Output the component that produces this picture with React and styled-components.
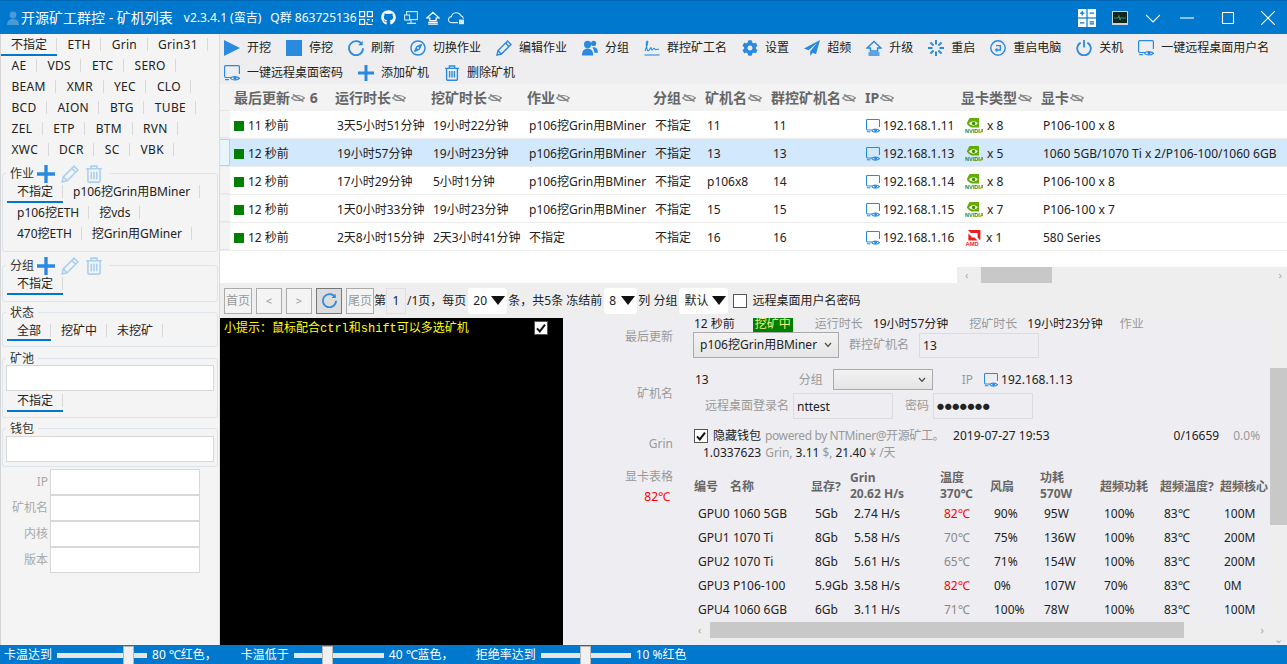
import React from 'react';
import styled, { createGlobalStyle } from 'styled-components';
import { FaGithub, FaCog, FaRegCompass } from 'react-icons/fa';

const BLUE = '#2a8ae0';
const FONT = '"Noto Sans", "Noto Sans CJK SC", sans-serif';

const Global = createGlobalStyle`
  html, body { margin: 0; height: 100%; overflow: hidden; }
  body { font: 12px/16px ${FONT}; color: #222; background: #eeeef2; }
  * { box-sizing: border-box; }
`;

const Page = styled.div`
  display: grid;
  grid-template-rows: 34px minmax(0, 1fr) 19px;
  grid-template-columns: 220px minmax(0, 1fr);
  height: 664px;
  overflow: hidden;
`;

/* ---------- title bar ---------- */
const TitleBar = styled.header`
  grid-column: 1 / 3;
  display: flex;
  align-items: center;
  background: #0078cd;
  border-top: 1px solid #0068b4;
  color: #fff;
  padding: 0 0 0 7px;
  white-space: nowrap;
`;
const Title = styled.span`
  font-size: 14px;
  margin: 0 11px 0 2px;
`;
const TitleInfo = styled.span`
  margin-right: ${p => p.$mr || 0}px;
`;
const TitleIcons = styled.div`
  display: flex;
  align-items: center;
  gap: 8px;
  margin-left: 2px;
  svg { display: block; }
`;
const WinButtons = styled.div`
  display: flex;
  align-items: center;
  margin-left: auto;
`;
const WinButton = styled.span`
  display: flex;
  justify-content: center;
  width: ${p => p.$w}px;
  svg { display: block; }
`;

/* ---------- side bar ---------- */
const Side = styled.aside`
  background: #f4f4f4;
  border-left: 1px solid #d4d4d4;
  border-right: 1px solid #dcdcdc;
  overflow: hidden;
  padding-top: 1px;
`;
const Tabs = styled.div`
  display: flex;
  flex-wrap: wrap;
  padding-left: ${p => p.$pl || 0}px;
  padding-right: ${p => p.$pr || 0}px;
`;
const Tab = styled.span`
  height: ${p => p.$h || 21}px;
  line-height: 19px;
  padding: 0 ${p => (p.$latin ? 10.5 : 10)}px;
  white-space: nowrap;
  letter-spacing: ${p => (p.$latin ? '.3px' : 0)};
  border-bottom: 2px solid ${p => (p.$on ? '#0078cd' : 'transparent')};
  background: linear-gradient(#d8d8d8, #d8d8d8) right 3px / 1px 13px no-repeat;
`;
const Group = styled.fieldset`
  margin: ${p => p.$mt || 0}px 1px 0;
  padding: 0 3px ${p => p.$pb || 6}px;
  border: 1px solid #dde4ec;
  border-radius: 3px;
  min-width: 0;
`;
const Legend = styled.legend`
  display: flex;
  align-items: center;
  height: 17px;
  padding: 0 4px;
  margin-left: 0;
  color: #333;
`;
const LegendIcons = styled.span`
  display: flex;
  align-items: center;
  gap: 6px;
  margin: 0 2px 0 3px;
`;
const WideInput = styled.div`
  height: 26px;
  background: #fff;
  border: 1px solid #d8d8d8;
  margin-top: ${p => p.$mt || 0}px;
`;
const FilterForm = styled.div`
  display: grid;
  grid-template-columns: 49px 150px;
  grid-auto-rows: 26px;
  margin-top: 2px;
`;
const FilterLabel = styled.label`
  color: #aaa;
  text-align: right;
  line-height: 26px;
  padding-right: 2px;
`;
const FilterInput = styled.div`
  background: #fff;
  border: 1px solid #d8d8d8;
`;

/* ---------- main area ---------- */
const Main = styled.main`
  display: flex;
  flex-direction: column;
  min-width: 0;
  min-height: 0;
`;
const Toolbar = styled.div`
  display: flex;
  flex-wrap: wrap;
  align-content: flex-start;
  gap: 0 15px;
  height: 50px;
  padding: 1px 0 0 4px;
  background: #eeeef0;
`;
const Tool = styled.span`
  display: flex;
  align-items: center;
  gap: 7px;
  height: 25px;
  white-space: nowrap;
  svg { display: block; flex: none; }
`;

const HEAD_COLS = '10px 101px 96px 96px 126px 52px 66px 94px 96px 80px 1fr';
const HeadRow = styled.div`
  display: grid;
  grid-template-columns: ${HEAD_COLS};
  height: 27px;
  align-items: center;
  background: #f3f3f3;
`;
const HeadCell = styled.span`
  display: flex;
  align-items: center;
  gap: 1px;
  padding-left: 4px;
  font-size: 14px;
  font-weight: 700;
  color: #666;
  white-space: nowrap;
`;
const Gutter = styled.span`
  align-self: stretch;
  background: ${p => (p.$on ? '#e9f5fd' : '#f3f3f3')};
  border: 1px solid ${p => (p.$on ? '#a0d8f4' : 'transparent')};
  border-left: 0;
  border-bottom-color: ${p => (p.$on ? '#a0d8f4' : '#e6e6e6')};
`;
const TableBody = styled.div`
  flex: 1;
  min-height: 0;
  background: #fff;
  display: flex;
  flex-direction: column;
`;
const MinerRow = styled.div`
  display: grid;
  grid-template-columns: ${HEAD_COLS};
  height: 28px;
  align-items: center;
  background: ${p => (p.$on ? '#d1e8fd' : '#fff')};
  border-bottom: 1px solid #ececec;
`;
const Cell = styled.span`
  display: flex;
  align-items: center;
  gap: ${p => p.$gap || 4}px;
  padding: 2px 0 0 ${p => p.$pl || 6}px;
  white-space: nowrap;
  overflow: hidden;
  color: #222;
  svg { flex: none; }
`;
const Dot = styled.i`
  width: 10px;
  height: 10px;
  background: #008000;
`;
const HScrollRow = styled.div`
  margin-top: auto;
  display: flex;
  justify-content: flex-end;
`;
const HScroll = styled.div`
  display: flex;
  align-items: center;
  justify-content: space-between;
  width: ${p => p.$w}px;
  height: 16px;
  background: #eeeeee;
  color: #aaa;
  font-size: 11px;
  padding: 0 ${p => p.$pr || 5}px 0 ${p => p.$pl || 5}px;
`;
const Thumb = styled.i`
  height: 100%;
  width: ${p => p.$w}px;
  margin: 0 ${p => p.$mr}px 0 ${p => p.$ml || 6}px;
  background: #c8c8c8;
`;

/* ---------- pager ---------- */
const Pager = styled.div`
  display: flex;
  align-items: center;
  height: 35px;
  padding-left: 4px;
  background: #eeeeee;
  white-space: nowrap;
`;
const PageButton = styled.span`
  display: flex;
  align-items: center;
  justify-content: center;
  height: 26px;
  width: ${p => p.$w || 26}px;
  margin-right: ${p => p.$mr ?? 4}px;
  border: 1px solid ${p => (p.$on ? '#777' : '#aaa')};
  background: ${p => (p.$on ? '#dcdcdc' : '#f4f4f4')};
  color: #999;
  font-size: ${p => (p.$w ? 12 : 11)}px;
`;
const PageNo = styled.span`
  width: 20px;
  height: 26px;
  line-height: 24px;
  text-align: center;
  border: 1px solid #e0e0e0;
  margin-right: 1px;
`;
const PageSelect = styled.span`
  display: flex;
  align-items: center;
  justify-content: space-between;
  width: ${p => p.$w}px;
  height: 26px;
  margin: 0 ${p => p.$mr ?? 1}px 0 ${p => p.$ml ?? 2}px;
  padding: 0 2px 0 5px;
  background: #fff;
  border-radius: 3px;
  font-size: 12px;
`;
const Tri = styled.i`
  width: 0;
  height: 0;
  border-left: 7px solid transparent;
  border-right: 7px solid transparent;
  border-top: 9px solid #111;
`;
const Check = styled.span`
  display: inline-flex;
  align-items: center;
  justify-content: center;
  flex: none;
  width: 14px;
  height: 14px;
  background: #fff;
  border: 1px solid #555;
`;

/* ---------- bottom split ---------- */
const Split = styled.div`
  display: flex;
  height: 327px;
`;
const Console = styled.div`
  width: 343px;
  background: #000;
  display: flex;
  justify-content: space-between;
  padding: 3px 15px 0 4px;
  color: #ffff00;
  font-family: "Liberation Mono", "Noto Sans CJK SC", monospace;
`;
const Detail = styled.div`
  flex: 1;
  min-width: 0;
  display: flex;
  overflow: hidden;
  background: #eeeef2;
`;
const DetailBody = styled.div`
  width: 707px;
  margin-top: -3px;
`;
const Section = styled.section`
  display: flex;
  gap: 20px;
  margin-top: ${p => p.$mt || 0}px;
`;
const SectionLabel = styled.div`
  flex: none;
  width: 110px;
  align-self: ${p => (p.$top ? 'flex-start' : 'center')};
  padding-top: ${p => (p.$top ? 2 : 0)}px;
  text-align: right;
  color: #999;
`;
const Temp = styled.div`
  color: #f00;
  margin: 4px 3px 0 0;
`;
const Lines = styled.div`
  flex: 1;
  min-width: 0;
`;
const Line = styled.div`
  display: flex;
  align-items: center;
  height: ${p => p.$h || 17}px;
  margin-top: ${p => p.$mt || 0}px;
  padding-left: ${p => p.$pl || 0}px;
  white-space: nowrap;
  svg { flex: none; display: block; }
`;
const Val = styled.span`
  margin-left: ${p => p.$ml || 0}px;
`;
const Dim = styled.span`
  color: #999;
  margin-left: ${p => p.$ml || 0}px;
  letter-spacing: ${p => p.$ls || 0};
`;
const Badge = styled.span`
  background: #008000;
  color: #f2f27a;
  width: 40px;
  text-align: center;
  margin-left: ${p => p.$ml}px;
`;
const Combo = styled.span`
  display: flex;
  align-items: center;
  justify-content: space-between;
  width: ${p => p.$w}px;
  height: ${p => p.$h}px;
  padding: 0 6px;
  margin-left: ${p => p.$ml || 0}px;
  border: 1px solid #aaa;
  background: linear-gradient(#f2f2f2, #e5e5e5);
`;
const TextBox = styled.span`
  display: block;
  width: ${p => p.$w}px;
  height: ${p => p.$h || 26}px;
  line-height: ${p => (p.$h || 26) - 1}px;
  margin-left: ${p => p.$ml || 0}px;
  padding-left: ${p => p.$pl || 3}px;
  border: 1px solid #dcdcdc;
`;
const Dots = styled(TextBox)`
  font-size: 7px;
  letter-spacing: .6px;
`;
const GpuWrap = styled.div`
  overflow: hidden;
  white-space: nowrap;
`;
const GPU_TAIL = '39px 90px 50px 50px 60px 60px 60px 60px';
const GpuHead = styled.div`
  display: grid;
  grid-template-columns: 36px 81px ${GPU_TAIL};
  height: 35px;
  align-items: end;
  padding-left: 1px;
  color: #666;
  font-weight: 700;
  line-height: 16px;
`;
const GpuHeadCell = styled.div`
  align-self: ${p => (p.$two ? 'end' : 'center')};
  margin-top: ${p => (p.$two ? 0 : 4)}px;
`;
const GpuRow = styled.div`
  display: grid;
  grid-template-columns: 35px 78px ${GPU_TAIL};
  height: 24px;
  align-items: center;
  padding-left: 5px;
`;
const GpuCell = styled.span`
  padding-left: ${p => p.$pl ?? 4}px;
  color: ${p => p.$color || '#222'};
`;
const VScroll = styled.div`
  flex: none;
  width: 17px;
  background: #eeeeee;
  display: flex;
  flex-direction: column;
  align-items: center;
  color: #aaa;
`;
const VThumb = styled.i`
  width: 100%;
  height: 157px;
  margin-top: 50px;
  background: #c8c8c8;
`;
const VArrow = styled.span`
  margin-top: auto;
  line-height: 12px;
  font-size: 11px;
`;

/* ---------- status bar ---------- */
const Status = styled.footer`
  grid-column: 1 / 3;
  display: flex;
  align-items: center;
  background: #0078cd;
  color: #fff;
  padding: 1px 0 0 4px;
  white-space: nowrap;
`;
const Track = styled.span`
  position: relative;
  width: 90px;
  height: 5px;
  margin: 0 5px;
  background: #e6e6e6;
`;
const Knob = styled.i`
  position: absolute;
  top: -7px;
  left: ${p => p.$at}px;
  width: 11px;
  height: 19px;
  background: #f0f0f0;
  border: 1px solid #b5b5b5;
`;
const StatusText = styled.span`
  margin-right: ${p => p.$mr || 0}px;
`;

/* ---------- drawings ---------- */
const Ico = ({ children, s = 16, vb = 16, ...r }) => (
  <svg width={s} height={s} viewBox={`0 0 ${vb} ${vb}`} fill="none" stroke={BLUE} strokeWidth="1.4" {...r}>{children}</svg>
);
const PlayIcon = () => <Ico stroke="none"><path d="M0 0L16 8L0 16Z" fill={BLUE} /></Ico>;
const StopIcon = () => <Ico stroke="none"><rect width="16" height="16" fill={BLUE} /></Ico>;
const RefreshIcon = ({ s = 16 }) => (
  <Ico s={s} strokeWidth="1.8"><path d="M14 4.6A7 7 0 1 0 15 8.2" /><path d="M14.6 0.8V5.2H10.2" fill={BLUE} stroke="none" /></Ico>
);
const PencilIcon = ({ c = BLUE, s = 16 }) => (
  <Ico s={s} stroke={c}><path d="M1 15L2 10.6L11.6 1L15 4.4L5.4 14Z" /><path d="M9.6 3L13 6.4M2 10.6L5.4 14" /></Ico>
);
const PeopleIcon = () => (
  <Ico stroke="none">
    <g fill={BLUE}>
      <circle cx="5.6" cy="4.4" r="3.6" />
      <path d="M0 15.4C0 10.6 2.4 8.6 5.6 8.6S11.2 10.6 11.2 15.4Z" />
      <circle cx="11.6" cy="3.4" r="2.6" />
      <path d="M10.4 7.4C13.4 6.6 16 8.6 16 12.8H12.4C12.2 10.6 11.6 9 10.4 7.4Z" />
    </g>
  </Ico>
);
const SignIcon = () => (
  <Ico strokeWidth="1.1">
    <path d="M1 11C3 6 4.6 1 3.4 1C1.8 1 2 8 3.6 10.6C5 12 6.4 7.4 7 7.6C7.6 8 7 10 8 10C9 10 9.4 8 10.2 8.2C11 8.4 10.8 9.8 11.6 9.8L15 9" />
    <path d="M.5 15H15.5" />
  </Ico>
);
const PlaneIcon = () => (
  <Ico stroke="none"><path d="M16 0L0 8.4L4.6 10.2L13 3L6.2 11.2V16L8.8 12.8L12 14.2Z" fill={BLUE} /></Ico>
);
const HomeIcon = ({ c = BLUE, s = 16 }) => (
  <Ico s={s} stroke={c}><path d="M1 8L8 1.5L15 8H11.6V11H4.4V8Z" /><path d="M2.5 13H13.5M2.5 15H13.5" /></Ico>
);
const SpinIcon = () => (
  <Ico strokeWidth="2">
    <path d="M8 0V4.5M8 11.5V16M0 8H4.5M11.5 8H16M2.4 2.4L5.5 5.5M10.5 10.5L13.6 13.6M2.4 13.6L5.5 10.5M10.5 5.5L13.6 2.4" />
  </Ico>
);
const RebootIcon = () => (
  <Ico><circle cx="8" cy="8" r="7.2" /><path d="M6 5.6H10.4V10H6.6" /><path d="M7.4 8.4L5.6 10L7.4 11.6" /></Ico>
);
const PowerIcon = () => (
  <Ico strokeWidth="1.8"><path d="M4.6 2.6A6.8 6.8 0 1 0 11.4 2.6" /><path d="M8 0V7.6" /></Ico>
);
const MonitorEye = ({ s = 16 }) => (
  <Ico s={s} strokeWidth="1.2">
    <path d="M7 12.5H1.5A1 1 0 0 1 .6 11.5V1.5A1 1 0 0 1 1.5 .6H14.5A1 1 0 0 1 15.4 1.5V9" />
    <path d="M6.6 13.2C8 11 13 11 15.6 13.2C13 15.6 8 15.6 6.6 13.2Z" />
    <circle cx="11" cy="13.2" r="1" fill={BLUE} />
    <path d="M1 14.6H5" />
  </Ico>
);
const TrashIcon = ({ c = BLUE, s = 16 }) => (
  <Ico s={s} stroke={c}>
    <path d="M1 3.4H15M5.4 3.2V1H10.6V3.2M2.6 3.4V14.2A1 1 0 0 0 3.6 15.2H12.4A1 1 0 0 0 13.4 14.2V3.4" />
    <path d="M5.6 6V12.6M8 6V12.6M10.4 6V12.6" />
  </Ico>
);
const PlusIcon = ({ s = 16, c = BLUE }) => (
  <Ico s={s} stroke={c} strokeWidth="3"><path d="M8 0V16M0 8H16" /></Ico>
);
const EyeOff = () => (
  <svg width="14" height="10" viewBox="0 0 14 10" fill="none" stroke="#888" strokeWidth="1.1">
    <path d="M.5 5C4 1.6 10 1.6 13.5 5C10 8.4 4 8.4 .5 5Z" />
    <path d="M2 1.5L12.5 8.5" strokeWidth="1.6" />
  </svg>
);
const NvidiaLogo = () => (
  <svg width="18" height="16" viewBox="0 0 18 16">
    <path d="M4.5 0H14V9.6H6.5C4.6 8.8 3 7.6 1.8 5.6C2.6 3.6 3.4 1.8 4.5 0Z" fill="#5fae00" />
    <path d="M4 5.4C6.4 2.4 10.6 2.4 12.8 5.6C10.6 8 6.6 8.2 4 5.4Z" fill="#fff" />
    <circle cx="8.6" cy="5.4" r="1.7" fill="#4c8a00" />
    <text x="0" y="15" fontSize="5.6" fontWeight="700" fill="#2f8a10" fontFamily="Liberation Sans, sans-serif">NVIDIA</text>
  </svg>
);
const AmdLogo = () => (
  <svg width="18" height="16" viewBox="0 0 18 16">
    <path d="M3 0H15.4V10.4L12.6 7.6V3H6Z" fill="#ee1c1c" />
    <path d="M3.4 3.4L6.4 6.4V7.4H9.6L12.4 10.4H3.4Z" fill="#ee1c1c" />
    <text x="0.5" y="15.8" fontSize="5.8" fontWeight="700" fill="#ee1c1c" fontFamily="Liberation Sans, sans-serif">AMD</text>
  </svg>
);
const CheckMark = () => (
  <svg width="12" height="12" viewBox="0 0 12 12" fill="none" stroke="#111" strokeWidth="2"><path d="M2 6.4L4.8 9.4L10 2.6" /></svg>
);
const ComboArrow = () => (
  <svg width="8" height="6" viewBox="0 0 8 6" fill="none" stroke="#444" strokeWidth="1.2"><path d="M1 1L4 4.4L7 1" /></svg>
);

const UserGlyph = () => (
  <svg width="12" height="14" viewBox="0 0 12 14" fill="#4a9ad6"><circle cx="6" cy="4" r="3.4" /><path d="M0 14C0 9.4 3 8 6 8S12 9.4 12 14Z" /></svg>
);
const QrIcon = () => (
  <svg width="14" height="14" viewBox="0 0 14 14" fill="none" stroke="#fff" strokeWidth="1.2">
    <rect x=".6" y=".6" width="5" height="5" /><rect x="8.4" y=".6" width="5" height="5" /><rect x=".6" y="8.4" width="5" height="5" />
    <path d="M8 8.6H10.6M13.4 8V11M8 11V13.6H13.4" />
  </svg>
);
const ScreenIcon = () => (
  <svg width="14" height="14" viewBox="0 0 14 14" fill="none" stroke="#cfe6f7" strokeWidth="1.1">
    <rect x="2.6" y=".6" width="10.8" height="8" /><rect x=".6" y="4" width="5" height="5" fill="#0078cd" /><path d="M3 12.4H12M7 9V12" />
  </svg>
);
const CloudIcon = () => (
  <svg width="18" height="14" viewBox="0 0 18 14" fill="none" stroke="#d8ecfa" strokeWidth="1.1">
    <path d="M10 11.6H3.6A3 3 0 0 1 3.4 5.6A5 5 0 0 1 12.8 4.6A3.6 3.6 0 0 1 15.4 7.6" />
    <rect x="11" y="8.6" width="5" height="4.6" fill="#d8ecfa" stroke="none" />
  </svg>
);
const CalcIcon = () => (
  <svg width="18" height="18" viewBox="0 0 18 18">
    <rect width="8.4" height="8.4" fill="#fff" /><rect x="9.6" width="8.4" height="8.4" fill="#fff" />
    <rect y="9.6" width="8.4" height="8.4" fill="#fff" /><rect x="9.6" y="9.6" width="8.4" height="8.4" fill="#fff" />
    <path d="M2 4.2H6.4M4.2 2V6.4M11.6 4.2H16M2 13.8H6.4M11.6 12.8H16M11.6 14.8H16" stroke="#0078cd" strokeWidth="1.2" />
  </svg>
);
const MonitorApp = () => (
  <svg width="16" height="14" viewBox="0 0 16 14">
    <rect width="16" height="14" fill="#c9d3da" /><rect x="1" y="1" width="14" height="11" fill="#12261f" />
    <path d="M2 7H6L7 4.5L8 9L9 6.4L9.6 7H14" stroke="#39c27a" strokeWidth=".7" fill="none" />
  </svg>
);
const WinGlyph = ({ d, w = 14, h = 14 }) => (
  <svg width={w} height={h} viewBox={`0 0 ${w} ${h}`} fill="none" stroke="#fff" strokeWidth="1.1"><path d={d} /></svg>
);

/* ---------- data ---------- */
const coins = ['ETH', 'Grin', 'Grin31', 'AE', 'VDS', 'ETC', 'SERO', 'BEAM', 'XMR', 'YEC', 'CLO', 'BCD', 'AION', 'BTG', 'TUBE', 'ZEL', 'ETP', 'BTM', 'RVN', 'XWC', 'DCR', 'SC', 'VBK'];
const works = ['p106挖Grin用BMiner', 'p106挖ETH', '挖vds', '470挖ETH', '挖Grin用GMiner'];
const tools = [
  [<PlayIcon />, '开挖'], [<StopIcon />, '停挖'], [<RefreshIcon />, '刷新'],
  [<FaRegCompass size={16} color={BLUE} />, '切换作业'], [<PencilIcon />, '编辑作业'],
  [<PeopleIcon />, '分组'], [<SignIcon />, '群控矿工名'],
  [<FaCog size={16} color={BLUE} />, '设置'], [<PlaneIcon />, '超频'],
  [<HomeIcon />, '升级'], [<SpinIcon />, '重启'], [<RebootIcon />, '重启电脑'], [<PowerIcon />, '关机'],
  [<MonitorEye />, '一键远程桌面用户名'], [<MonitorEye />, '一键远程桌面密码'], [<PlusIcon />, '添加矿机'], [<TrashIcon />, '删除矿机'],
];
const heads = ['最后更新', '运行时长', '挖矿时长', '作业', '分组', '矿机名', '群控矿机名', 'IP', '显卡类型', '显卡'];
const BM = 'p106挖Grin用BMiner';
const miners = [
  ['11 秒前', '3天5小时51分钟', '19小时22分钟', BM, '11', '11', '11', 'x 8', 'P106-100 x 8'],
  ['12 秒前', '19小时57分钟', '19小时23分钟', BM, '13', '13', '13', 'x 5', '1060 5GB/1070 Ti x 2/P106-100/1060 6GB'],
  ['12 秒前', '17小时29分钟', '5小时1分钟', BM, 'p106x8', '14', '14', 'x 8', 'P106-100 x 8'],
  ['12 秒前', '1天0小时33分钟', '19小时23分钟', BM, '15', '15', '15', 'x 7', 'P106-100 x 7'],
  ['12 秒前', '2天8小时15分钟', '2天3小时41分钟', '不指定', '16', '16', '16', 'x 1', '580 Series'],
];
const gpus = [
  ['GPU0', '1060 5GB', '5Gb', '2.74 H/s', '82℃', '90%', '95W', '100%', '83℃', '100M'],
  ['GPU1', '1070 Ti', '8Gb', '5.58 H/s', '70℃', '75%', '136W', '100%', '83℃', '200M'],
  ['GPU2', '1070 Ti', '8Gb', '5.61 H/s', '65℃', '71%', '154W', '100%', '83℃', '200M'],
  ['GPU3', 'P106-100', '5.9Gb', '3.58 H/s', '82℃', '0%', '107W', '70%', '83℃', '0M'],
  ['GPU4', '1060 6GB', '6Gb', '3.11 H/s', '71℃', '100%', '78W', '100%', '83℃', '100M'],
];

const GroupHead = ({ title }) => (
  <Legend>
    {title}
    <LegendIcons>
      <PlusIcon s={18} />
      <PencilIcon c="#a9d0f2" s={18} />
      <TrashIcon c="#a9d0f2" s={18} />
    </LegendIcons>
  </Legend>
);

export default function App() {
  return (
    <Page>
      <Global />
      <TitleBar>
        <UserGlyph />
        <Title>开源矿工群控 - 矿机列表</Title>
        <TitleInfo $mr={9}>v2.3.4.1 (蛮吉)</TitleInfo>
        <TitleInfo>Q群 863725136</TitleInfo>
        <TitleIcons>
          <QrIcon />
          <FaGithub size={15} color="#fff" />
          <ScreenIcon />
          <HomeIcon c="#fff" s={14} />
          <CloudIcon />
        </TitleIcons>
        <WinButtons>
          <WinButton $w={26}><CalcIcon /></WinButton>
          <WinButton $w={39}><MonitorApp /></WinButton>
          <WinButton $w={28}><WinGlyph d="M0 4L7 11L14 4" /></WinButton>
          <WinButton $w={40}><WinGlyph d="M0 7H14" /></WinButton>
          <WinButton $w={41}><WinGlyph d="M1.5 1.5H12.5V12.5H1.5Z" /></WinButton>
          <WinButton $w={39}><WinGlyph d="M0 0L14 14M14 0L0 14" /></WinButton>
        </WinButtons>
      </TitleBar>

      <Side>
        <Tabs $pr={6}>
          <Tab $on>不指定</Tab>
          {coins.map(c => <Tab key={c} $latin>{c}</Tab>)}
        </Tabs>
        <Group $mt={4}>
          <GroupHead title="作业" />
          <Tabs $pl={1}>
            <Tab $on>不指定</Tab>
            {works.map(w => <Tab key={w}>{w}</Tab>)}
          </Tabs>
        </Group>
        <Group $mt={5}>
          <GroupHead title="分组" />
          <Tabs $pl={1}><Tab $on>不指定</Tab></Tabs>
        </Group>
        <Group $mt={2} $pb={5}>
          <Legend>状态</Legend>
          <Tabs $pl={1}>
            <Tab $on $h={20}>全部</Tab>
            <Tab $h={20}>挖矿中</Tab>
            <Tab $h={20}>未挖矿</Tab>
          </Tabs>
        </Group>
        <Group $mt={3} $pb={5}>
          <Legend>矿池</Legend>
          <WideInput $mt={-2} />
          <Tabs $pl={1}><Tab $on>不指定</Tab></Tabs>
        </Group>
        <Group $mt={2} $pb={4}>
          <Legend>钱包</Legend>
          <WideInput $mt={-1} />
        </Group>
        <FilterForm>
          {['IP', '矿机名', '内核', '版本'].map(l => (
            <React.Fragment key={l}>
              <FilterLabel>{l}</FilterLabel>
              <FilterInput />
            </React.Fragment>
          ))}
        </FilterForm>
      </Side>

      <Main>
        <Toolbar>
          {tools.map(([icon, text]) => <Tool key={text}>{icon}{text}</Tool>)}
        </Toolbar>
        <HeadRow>
          <Gutter />
          {heads.map((h, i) => (
            <HeadCell key={h}>{h}<EyeOff />{i === 0 && <span>&nbsp;6</span>}</HeadCell>
          ))}
        </HeadRow>
        <TableBody>
          {miners.map((m, i) => {
            const on = i === 1;
            return (
              <MinerRow key={m[6]} $on={on}>
                <Gutter $on={on} />
                <Cell $pl={4}><Dot />{m[0]}</Cell>
                <Cell>{m[1]}</Cell>
                <Cell>{m[2]}</Cell>
                <Cell>{m[3]}</Cell>
                <Cell>不指定</Cell>
                <Cell>{m[4]}</Cell>
                <Cell>{m[5]}</Cell>
                <Cell $pl={5} $gap={3}><MonitorEye s={14} />192.168.1.{m[6]}</Cell>
                <Cell $pl={8} $gap={m[6] === '16' ? 3 : 4}>{m[6] === '16' ? <AmdLogo /> : <NvidiaLogo />}{m[7]}</Cell>
                <Cell>{m[8]}</Cell>
              </MinerRow>
            );
          })}
          <HScrollRow>
            <HScroll $w={330} $pl={8}>
              ‹<Thumb $w={71} $ml={5} $mr={220} />›
            </HScroll>
          </HScrollRow>
        </TableBody>

        <Pager>
          <PageButton $w={28}>首页</PageButton>
          <PageButton>&lt;</PageButton>
          <PageButton>&gt;</PageButton>
          <PageButton $on><RefreshIcon s={15} /></PageButton>
          <PageButton $w={28} $mr={0}>尾页</PageButton>
          第
          <PageNo>1</PageNo>
          /1页，每页
          <PageSelect $w={39}>20<Tri /></PageSelect>
          条，共5条 冻结前
          <PageSelect $w={33}>8<Tri /></PageSelect>
          列 分组
          <PageSelect $w={49} $mr={5}>默认<Tri /></PageSelect>
          <Check />
          <Val $ml={5}>远程桌面用户名密码</Val>
        </Pager>

        <Split>
          <Console>
            <span>小提示：鼠标配合ctrl和shift可以多选矿机</span>
            <Check><CheckMark /></Check>
          </Console>
          <Detail>
            <DetailBody>
              <Section>
                <SectionLabel>最后更新</SectionLabel>
                <Lines>
                  <Line $pl={1}>
                    <Val>12 秒前</Val>
                    <Badge $ml={18}>挖矿中</Badge>
                    <Dim $ml={22}>运行时长</Dim>
                    <Val $ml={10}>19小时57分钟</Val>
                    <Dim $ml={21}>挖矿时长</Dim>
                    <Val $ml={10}>19小时23分钟</Val>
                    <Dim $ml={17}>作业</Dim>
                  </Line>
                  <Line $h={26}>
                    <Combo $w={146} $h={26}>p106挖Grin用BMiner<ComboArrow /></Combo>
                    <Dim $ml={10}>群控矿机名</Dim>
                    <TextBox $w={120} $ml={10} $h={25}>13</TextBox>
                  </Line>
                </Lines>
              </Section>
              <Section $mt={11}>
                <SectionLabel>矿机名</SectionLabel>
                <Lines>
                  <Line $h={21} $pl={2}>
                    <Val>13</Val>
                    <Dim $ml={90}>分组</Dim>
                    <Combo $w={100} $h={21} $ml={10}><span /><ComboArrow /></Combo>
                    <Dim $ml={29}>IP</Dim>
                    <Val $ml={11}><MonitorEye s={14} /></Val>
                    <Val $ml={3}>192.168.1.13</Val>
                  </Line>
                  <Line $h={26} $mt={3}>
                    <Dim $ml={12}>远程桌面登录名</Dim>
                    <TextBox $w={100} $ml={4}>nttest</TextBox>
                    <Dim $ml={12}>密码</Dim>
                    <Dots $w={100} $ml={4}>●●●●●●●</Dots>
                  </Line>
                </Lines>
              </Section>
              <Section $mt={8}>
                <SectionLabel>Grin</SectionLabel>
                <Lines>
                  <Line $pl={1}>
                    <Check><CheckMark /></Check>
                    <Val $ml={5}>隐藏钱包</Val>
                    <Dim $ml={4} $ls="-.4px">powered by NTMiner@开源矿工。</Dim>
                    <Val $ml={9}>2019-07-27 19:53</Val>
                    <Val $ml={124}>0/16659</Val>
                    <Dim $ml={14}>0.0%</Dim>
                  </Line>
                  <Line $pl={10}>
                    <Val>1.0337623</Val>
                    <Dim $ml={4}>Grin,</Dim>
                    <Val $ml={3}>3.11</Val>
                    <Dim $ml={3}>$,</Dim>
                    <Val $ml={3}>21.40</Val>
                    <Dim $ml={3}>¥ /天</Dim>
                  </Line>
                </Lines>
              </Section>
              <Section $mt={6}>
                <SectionLabel $top>
                  显卡表格
                  <Temp>82℃</Temp>
                </SectionLabel>
                <Lines>
                  <GpuWrap>
                    <GpuHead>
                      <GpuHeadCell>编号</GpuHeadCell>
                      <GpuHeadCell>名称</GpuHeadCell>
                      <GpuHeadCell>显存?</GpuHeadCell>
                      <GpuHeadCell $two>Grin<br />20.62 H/s</GpuHeadCell>
                      <GpuHeadCell $two>温度<br />370℃</GpuHeadCell>
                      <GpuHeadCell>风扇</GpuHeadCell>
                      <GpuHeadCell $two>功耗<br />570W</GpuHeadCell>
                      <GpuHeadCell>超频功耗</GpuHeadCell>
                      <GpuHeadCell>超频温度?</GpuHeadCell>
                      <GpuHeadCell>超频核心</GpuHeadCell>
                    </GpuHead>
                    {gpus.map(g => (
                      <GpuRow key={g[0]}>
                        {g.map((v, i) => (
                          <GpuCell
                            key={i}
                            $pl={i < 2 ? 0 : 4}
                            $color={i === 4 ? (v === '82℃' ? '#f00' : '#888') : undefined}
                          >
                            {v}
                          </GpuCell>
                        ))}
                      </GpuRow>
                    ))}
                  </GpuWrap>
                  <HScroll $w={577} $pr={6}>
                    ‹<Thumb $w={474} $ml={8} $mr={77} />›
                  </HScroll>
                </Lines>
              </Section>
            </DetailBody>
            <VScroll>
              <VThumb />
              <VArrow>⌄</VArrow>
            </VScroll>
          </Detail>
        </Split>
      </Main>

      <Status>
        <StatusText>卡温达到</StatusText>
        <Track><Knob $at={66} /></Track>
        <StatusText $mr={24}>80 ℃红色，</StatusText>
        <StatusText>卡温低于</StatusText>
        <Track><Knob $at={28} /></Track>
        <StatusText $mr={22}>40 ℃蓝色，</StatusText>
        <StatusText>拒绝率达到</StatusText>
        <Track><Knob $at={39} /></Track>
        <StatusText>10 %红色</StatusText>
      </Status>
    </Page>
  );
}
